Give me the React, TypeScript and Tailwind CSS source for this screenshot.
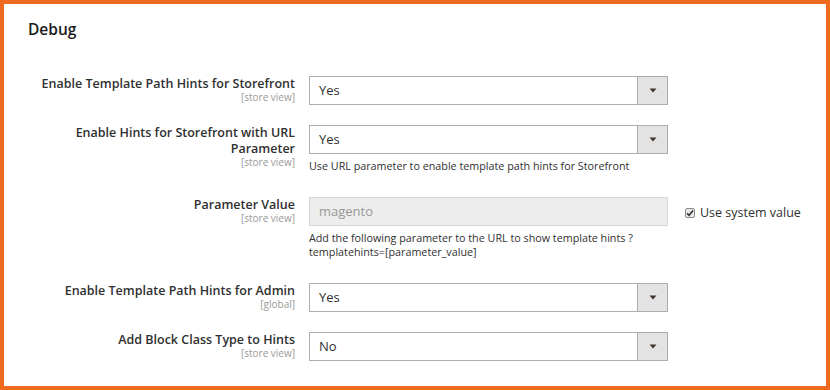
import React from "react";

const font = { fontFamily: '"Open Sans", "Noto Sans", sans-serif' };

function Select({ value }: { value: string }) {
  return (
    <div className="flex h-[29px] w-[359px] border border-[#adadad] bg-white">
      <div className="flex flex-1 items-center pl-[9px] text-[13px] text-[#303030]">{value}</div>
      <div className="flex w-[30px] items-center justify-center border-l border-[#adadad] bg-[#e3e3e3]">
        <svg width="8" height="5" viewBox="0 0 8 5">
          <path d="M0.5 0.5 L7.5 0.5 L4 4.5 Z" fill="#41362f" />
        </svg>
      </div>
    </div>
  );
}

function Label({ lines, scope }: { lines: string; scope: string }) {
  return (
    <div className="w-[281px] shrink-0 pr-[14px] text-right">
      <div className="text-[12.5px] font-semibold leading-[16px] text-[#303030]">{lines}</div>
      <div className="text-[10px] leading-[11px] text-[#999]">{scope}</div>
    </div>
  );
}

export default function App() {
  return (
    <div
      style={font}
      className="h-[390px] w-[830px] border-4 border-[#ef6a21] bg-white pl-[24px]"
    >
      <h2 className="pt-[14px] text-[15.5px] font-semibold leading-[22px] text-[#1a1a1a]">Debug</h2>
      <div className="mt-[36px] flex flex-col">
        <div className="flex">
          <Label lines="Enable Template Path Hints for Storefront" scope="[store view]" />
          <Select value="Yes" />
        </div>
        <div className="mt-[20px] flex">
          <Label lines="Enable Hints for Storefront with URL Parameter" scope="[store view]" />
          <div>
            <Select value="Yes" />
            <div className="mt-[5px] text-[10.75px] leading-[15px] text-[#303030]">
              Use URL parameter to enable template path hints for Storefront
            </div>
          </div>
        </div>
        <div className="mt-[23px] flex">
          <Label lines="Parameter Value" scope="[store view]" />
          <div>
            <div className="flex h-[29px] w-[359px] items-center border border-[#d6d6d6] bg-[#ededed] pl-[9px] text-[13px] text-[#999]">
              magento
            </div>
            <div className="mt-[5px] text-[10.75px] leading-[14px] text-[#303030]">
              Add the following parameter to the URL to show template hints ?
              <br />
              templatehints=[parameter_value]
            </div>
          </div>
          <label className="ml-[17px] mt-[6px] flex h-[20px] items-center gap-[5px] text-[12.5px] text-[#303030]">
            <span className="flex h-[10px] w-[10px] items-center justify-center rounded-[2px] border border-[#8a8a8a] bg-[#e8e8e8]">
              <svg width="8" height="8" viewBox="0 0 8 8">
                <path d="M1 4.2 L3.1 6.3 L7 1.5" stroke="#333" strokeWidth="1.6" fill="none" />
              </svg>
            </span>
            Use system value
          </label>
        </div>
        <div className="mt-[24px] flex">
          <Label lines="Enable Template Path Hints for Admin" scope="[global]" />
          <Select value="Yes" />
        </div>
        <div className="mt-[20px] flex">
          <Label lines="Add Block Class Type to Hints" scope="[store view]" />
          <Select value="No" />
        </div>
      </div>
    </div>
  );
}
